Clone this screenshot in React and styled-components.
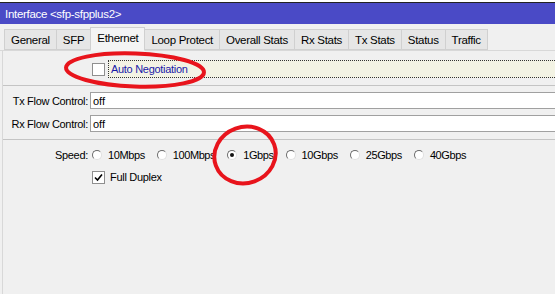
import React from 'react';
import styled, { createGlobalStyle } from 'styled-components';

const Global = createGlobalStyle`
  html, body { margin: 0; padding: 0; background: #f0f0f0; }
  body { font-family: 'Liberation Sans', Arial, sans-serif; font-size: 11px; color: #000; }
`;

const Window = styled.div`
  position: relative;
  width: 555px;
  height: 294px;
  overflow: hidden;
  background: #f0f0f0;
  display: flex;
  flex-direction: column;
`;

const TopEdge = styled.div`
  height: 2px;
  background: #ffffff;
  border-bottom: 1px solid #222;
`;

const TitleBar = styled.div`
  height: 21px;
  background: #4a4ac6;
  color: #fff;
  display: flex;
  align-items: center;
  padding-left: 5px;
  font-size: 11.5px;
  letter-spacing: -0.3px;
`;

const TabBar = styled.div`
  display: flex;
  align-items: flex-end;
  padding: 2px 0 0 4px;
  height: 24px;
  border-bottom: 1px solid #d8d8d8;
`;

const Tab = styled.div`
  height: ${p => (p.active ? '24px' : '21px')};
  margin-bottom: ${p => (p.active ? '-1px' : '0')};
  padding: 0 6px;
  padding-top: ${p => (p.active ? '4px' : '0')};
  display: flex;
  align-items: ${p => (p.active ? 'flex-start' : 'center')};
  box-sizing: border-box;
  background: ${p => (p.active ? '#f4f4f4' : '#e6e6e6')};
  border: 1px solid #d0d0d0;
  border-bottom-color: ${p => (p.active ? '#f4f4f4' : '#d0d0d0')};
  margin-right: -1px;
  z-index: ${p => (p.active ? 1 : 0)};
  white-space: nowrap;
  font-size: 11.5px;
  letter-spacing: -0.3px;
`;

const Panel = styled.div`
  flex: 1;
  margin-left: 2px;
  border-left: 1px solid #d8d8d8;
  padding-top: 9px;
  display: flex;
  flex-direction: column;
`;

const Row = styled.div`
  display: flex;
  align-items: center;
  height: ${p => p.h || 17}px;
  margin-bottom: ${p => p.mb || 0}px;
`;

const Spacer = styled.div`
  width: 87px;
  flex: none;
`;

const Label = styled.div`
  width: 85px;
  flex: none;
  text-align: right;
  padding-right: 2px;
  letter-spacing: -0.3px;
  white-space: nowrap;
`;

const Check = styled.div`
  width: 13px;
  height: 13px;
  flex: none;
  box-sizing: border-box;
  border: 1px solid #8f8f8f;
  background: #fff;
  margin-left: 2px;
  display: flex;
  align-items: center;
  justify-content: center;
`;

const FocusBox = styled.div`
  flex: 1;
  margin-left: 3px;
  height: 18px;
  box-sizing: border-box;
  border: 1px dotted #333;
  border-right: none;
  background: #f3f3e4;
  color: #1a1aa8;
  display: flex;
  align-items: center;
  padding-left: 2px;
  letter-spacing: -0.3px;
`;

const CheckText = styled.span`
  margin-left: 5px;
  letter-spacing: -0.3px;
`;

const Separator = styled.div`
  height: 1px;
  background: #c4c4c4;
  margin: ${p => p.m};
`;

const Field = styled.div`
  flex: 1;
  height: 17px;
  box-sizing: border-box;
  background: #fff;
  border: 1px solid #a0a0a0;
  border-right: none;
  display: flex;
  align-items: center;
  padding-left: 2px;
`;

const RadioGroup = styled.div`
  display: flex;
  align-items: center;
  gap: 12px;
  margin-left: 2px;
`;

const RadioItem = styled.div`
  display: flex;
  align-items: center;
  gap: 6px;
  letter-spacing: -0.4px;
`;

const Radio = styled.div`
  width: 10px;
  height: 10px;
  flex: none;
  border-radius: 50%;
  box-sizing: border-box;
  border: 1px solid #6a6a6a;
  border-right-color: #e0e0e0;
  border-bottom-color: #e0e0e0;
  background: #fff;
  display: flex;
  align-items: center;
  justify-content: center;
  &::after {
    content: '';
    width: 4px;
    height: 4px;
    border-radius: 50%;
    background: ${p => (p.checked ? '#111' : 'transparent')};
  }
`;

const Marks = styled.svg`
  position: absolute;
  left: 0;
  top: 0;
  pointer-events: none;
`;

const tabs = ['General', 'SFP', 'Ethernet', 'Loop Protect', 'Overall Stats', 'Rx Stats', 'Tx Stats', 'Status', 'Traffic'];

const speeds = ['10Mbps', '100Mbps', '1Gbps', '10Gbps', '25Gbps', '40Gbps'];

export default function App() {
  return (
    <Window>
      <Global />
      <TopEdge />
      <TitleBar>Interface &lt;sfp-sfpplus2&gt;</TitleBar>
      <TabBar>
        {tabs.map(name => (
          <Tab key={name} active={name === 'Ethernet'}>{name}</Tab>
        ))}
      </TabBar>
      <Panel>
        <Row h={18}>
          <Spacer />
          <Check />
          <FocusBox>Auto Negotiation</FocusBox>
        </Row>
        <Separator m="7px 0 6px" />
        <Row mb={6}>
          <Label>Tx Flow Control:</Label>
          <Field>off</Field>
        </Row>
        <Row>
          <Label>Rx Flow Control:</Label>
          <Field>off</Field>
        </Row>
        <Separator m="7px 0 6px" />
        <Row h={18} mb={4}>
          <Label>Speed:</Label>
          <RadioGroup>
            {speeds.map(s => (
              <RadioItem key={s}>
                <Radio checked={s === '1Gbps'} />
                {s}
              </RadioItem>
            ))}
          </RadioGroup>
        </Row>
        <Row h={18}>
          <Spacer />
          <Check>
            <svg width="9" height="9" viewBox="0 0 9 9">
              <path d="M1 4.5 L3.5 7 L8 1.5" fill="none" stroke="#000" strokeWidth="1.6" />
            </svg>
          </Check>
          <CheckText>Full Duplex</CheckText>
        </Row>
      </Panel>
      <Marks width="555" height="294">
        <ellipse cx="135" cy="70" rx="69" ry="16.5" fill="none" stroke="#e8141c" strokeWidth="4" transform="rotate(2 135 70)" />
        <ellipse cx="245" cy="155" rx="31" ry="28" fill="none" stroke="#e8141c" strokeWidth="4" transform="rotate(-20 245 155)" />
      </Marks>
    </Window>
  );
}
